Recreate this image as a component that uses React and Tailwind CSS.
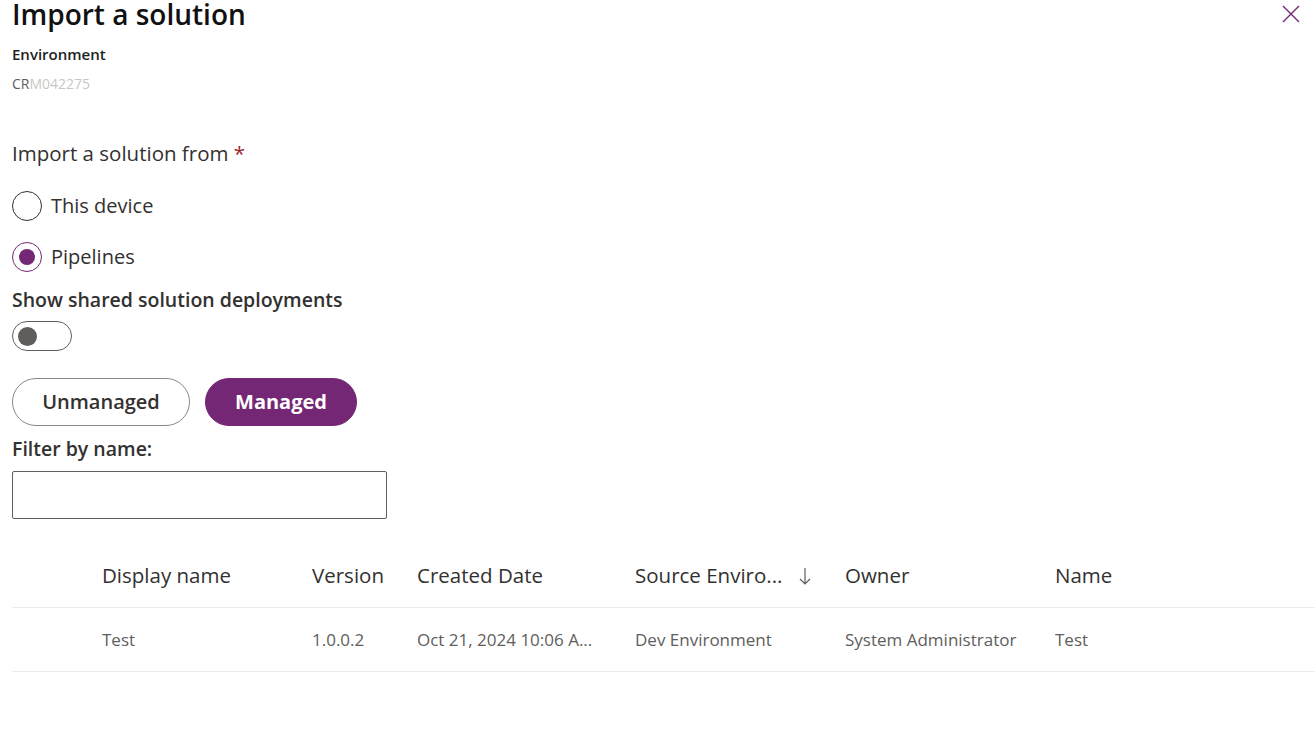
import React, { useState } from 'react';

const font = { fontFamily: '"Open Sans", "Noto Sans", sans-serif' };

function Radio({ checked, label, onClick }) {
  return (
    <button type="button" onClick={onClick} className="flex items-center gap-[9px] h-[30px]">
      <span
        className={
          'flex h-[30px] w-[30px] items-center justify-center rounded-full border ' +
          (checked ? 'border-[#742774]' : 'border-[#323130]')
        }
      >
        {checked && <span className="h-[16px] w-[16px] rounded-full bg-[#742774]" />}
      </span>
      <span className="text-[20px] text-[#323130]">{label}</span>
    </button>
  );
}

function App() {
  const [source, setSource] = useState('pipelines');
  const [shared, setShared] = useState(false);
  const [kind, setKind] = useState('managed');
  const [filter, setFilter] = useState('');

  const columns = ['Display name', 'Version', 'Created Date', 'Source Enviro...', 'Owner', 'Name'];
  const rows = [
    ['Test', '1.0.0.2', 'Oct 21, 2024 10:06 A...', 'Dev Environment', 'System Administrator', 'Test'],
  ];

  return (
    <div className="h-[742px] w-[1315px] overflow-hidden bg-white text-[#323130]" style={font}>
      <div className="flex items-start justify-between">
        <h1 className="mt-[-6px] ml-[12px] text-[28px] font-semibold leading-[40px] text-[#111]">Import a solution</h1>
        <button type="button" className="mr-[14px] mt-[4px] text-[#742774]">
          <svg width="20" height="20" viewBox="0 0 20 20" fill="none" stroke="currentColor" strokeWidth="1.4">
            <path d="M2 2 L18 18 M18 2 L2 18" />
          </svg>
        </button>
      </div>

      <div className="px-[12px]">
        <div className="mt-[10px] text-[15px] font-semibold leading-[20px] text-[#201f1e]">Environment</div>
        <div className="mt-[10px] text-[14px] leading-[20px]">
          <span className="text-[#605e5c]">CR</span>
          <span className="text-[#c8c6c4]">M042275</span>
        </div>

        <div className="mt-[45px] text-[20.5px] leading-[28px]">
          Import a solution from <span className="text-[#a4262c]">*</span>
        </div>

        <div className="mt-[24px] flex flex-col gap-[21px]">
          <Radio checked={source === 'device'} label="This device" onClick={() => setSource('device')} />
          <Radio checked={source === 'pipelines'} label="Pipelines" onClick={() => setSource('pipelines')} />
        </div>

        <div className="mt-[14px] text-[19.5px] font-semibold leading-[28px] text-[#323130]">
          Show shared solution deployments
        </div>
        <button
          type="button"
          onClick={() => setShared(!shared)}
          className={
            'mt-[7px] flex h-[30px] w-[60px] items-center rounded-full border px-[5px] ' +
            (shared ? 'justify-end border-[#742774] bg-[#742774]' : 'justify-start border-[#605e5c] bg-white')
          }
        >
          <span className={'h-[19px] w-[19px] rounded-full ' + (shared ? 'bg-white' : 'bg-[#605e5c]')} />
        </button>

        <div className="mt-[27px] flex gap-[15px]">
          <button
            type="button"
            onClick={() => setKind('unmanaged')}
            className={
              'h-[48px] w-[178px] rounded-full border text-[20px] ' +
              (kind === 'unmanaged'
                ? 'border-[#742774] bg-[#742774] font-bold text-white'
                : 'border-[#8a8886] bg-white font-semibold text-[#323130]')
            }
          >
            Unmanaged
          </button>
          <button
            type="button"
            onClick={() => setKind('managed')}
            className={
              'h-[48px] w-[152px] rounded-full border text-[20px] ' +
              (kind === 'managed'
                ? 'border-[#742774] bg-[#742774] font-bold text-white'
                : 'border-[#8a8886] bg-white font-semibold text-[#323130]')
            }
          >
            Managed
          </button>
        </div>

        <div className="mt-[10px] text-[19.5px] font-semibold leading-[26px] text-[#323130]">Filter by name:</div>
        <input
          value={filter}
          onChange={(e) => setFilter(e.target.value)}
          className="mt-[9px] block h-[48px] w-[375px] rounded-[2px] border border-[#605e5c] px-[10px] text-[18px] outline-none"
        />

        <div className="mt-[25px] mr-[-12px]">
          <div className="grid h-[64px] grid-cols-[90px_210px_105px_218px_210px_210px_1fr] items-center border-b border-[#edebe9] text-[20.5px] text-[#323130]">
            <div />
            {columns.map((c, i) => (
              <div key={c} className="flex items-center">
                <span>{c}</span>
                {i === 3 && (
                  <svg className="ml-[16px]" width="14" height="20" viewBox="0 0 14 20" fill="none" stroke="#605e5c" strokeWidth="1.2">
                    <path d="M7 2 V18 M2 13 L7 18 L12 13" />
                  </svg>
                )}
              </div>
            ))}
          </div>
          {rows.map((r, ri) => (
            <div
              key={ri}
              className="grid h-[64px] grid-cols-[90px_210px_105px_218px_210px_210px_1fr] items-center border-b border-[#edebe9] text-[17px] text-[#605e5c]"
            >
              <div />
              {r.map((cell, ci) => (
                <div key={ci} className="truncate">{cell}</div>
              ))}
            </div>
          ))}
        </div>
      </div>
    </div>
  );
}

export default App;
